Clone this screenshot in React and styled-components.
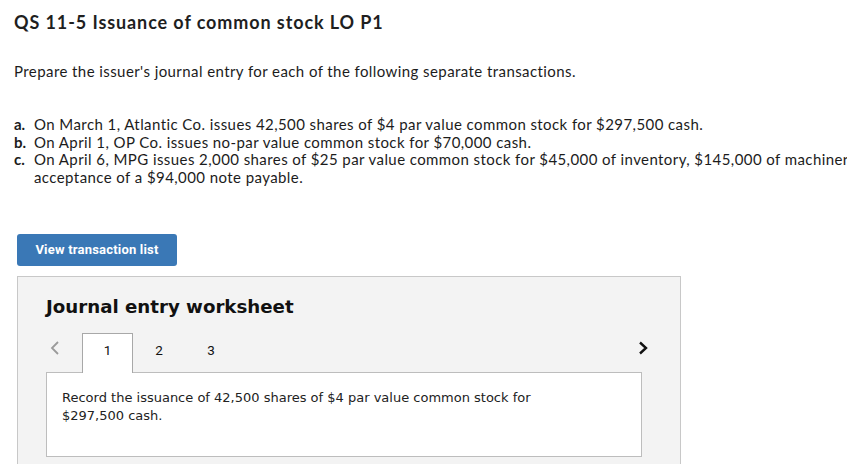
import React from "react";
import styled, { createGlobalStyle } from "styled-components";

const Global = createGlobalStyle`
  html, body { margin: 0; padding: 0; background: #fff; overflow: hidden; }
  body { width: 847px; height: 464px; }
`;

const Page = styled.div`
  width: 930px;
  padding: 11px 0 0 14px;
  font-family: Lato, "Open Sans", sans-serif;
  color: #1c1c1c;
`;

const Title = styled.h1`
  margin: 0;
  font-size: 18px;
  line-height: 22px;
  font-weight: 700;
  letter-spacing: 0.9px;
  color: #1f1f1f;
`;

const Intro = styled.p`
  margin: 28px 0 0;
  font-size: 15px;
  line-height: 20px;
  letter-spacing: 0.42px;
`;

const List = styled.ol`
  list-style: none;
  margin: 35px 0 0;
  padding: 0;
  font-size: 15px;
  line-height: 17.7px;
  letter-spacing: 0.42px;
`;

const Item = styled.li`
  display: flex;
`;

const Label = styled.span`
  flex: 0 0 20px;
  font-weight: 700;
  letter-spacing: 0;
`;

const ItemText = styled.span`
  flex: 1;
`;

const Button = styled.button`
  display: block;
  margin: 47px 0 0 3px;
  width: 160px;
  height: 32px;
  border: none;
  border-radius: 3px;
  background: #3a78b6;
  color: #fff;
  font-family: Roboto, "Liberation Sans", sans-serif;
  font-weight: 700;
  font-size: 13px;
  letter-spacing: 0.2px;
  cursor: pointer;
`;

const Worksheet = styled.section`
  margin: 10px 0 0 3px;
  width: 664px;
  height: 220px;
  background: #f3f3f3;
  border: 1px solid #c8c8c8;
  box-sizing: border-box;
  padding: 19px 32px 0 28px;
`;

const WsTitle = styled.h2`
  margin: 0;
  font-family: "DejaVu Sans", Verdana, sans-serif;
  font-size: 18.2px;
  line-height: 22px;
  font-weight: 700;
  color: #111;
`;

const TabRow = styled.div`
  display: flex;
  align-items: stretch;
  height: 40px;
  margin-top: 15px;
  position: relative;
  z-index: 1;
`;

const Arrow = styled.button`
  border: none;
  background: none;
  padding: ${(p) => (p.$right ? "0" : "0 0 0 4px")};
  width: 36px;
  display: flex;
  align-items: flex-start;
  padding-top: 8px;
  justify-content: ${(p) => (p.$right ? "flex-end" : "flex-start")};
  color: ${(p) => (p.$right ? "#111" : "#9a9a9a")};
  cursor: pointer;
`;

const Tabs = styled.div`
  display: flex;
  flex: 1;
`;

const Tab = styled.div`
  width: ${(p) => (p.$active ? "51px" : "52px")};
  box-sizing: border-box;
  display: flex;
  justify-content: center;
  padding-top: 8px;
  font-family: Roboto, "Liberation Sans", sans-serif;
  font-size: 13.5px;
  color: #111;
  background: ${(p) => (p.$active ? "#fff" : "transparent")};
  border: 1px solid ${(p) => (p.$active ? "#a8a8a8" : "transparent")};
  border-bottom: none;
`;

const Content = styled.div`
  width: 596px;
  height: 85px;
  box-sizing: border-box;
  margin-top: -1px;
  background: #fff;
  border: 1px solid #bdbdbd;
  padding: 16px 15px;
`;

const ContentText = styled.p`
  margin: 0;
  max-width: 500px;
  font-family: "DejaVu Sans", Verdana, sans-serif;
  font-size: 13px;
  line-height: 18px;
  color: #222;
`;

const Chevron = ({ dir }) =>
  dir === "left" ? (
    <svg width="10" height="14" viewBox="0 0 10 14" fill="none" stroke="currentColor" strokeWidth="1.8">
      <path d="M8 1 L2 7 L8 13" />
    </svg>
  ) : (
    <svg width="10" height="14" viewBox="0 0 10 14" fill="none" stroke="currentColor" strokeWidth="2.4">
      <path d="M2 1.5 L8 7 L2 12.5" />
    </svg>
  );

export default function App() {
  return (
    <>
      <Global />
      <Page>
        <Title>QS 11-5 Issuance of common stock LO P1</Title>
        <Intro>Prepare the issuer's journal entry for each of the following separate transactions.</Intro>
        <List>
          <Item>
            <Label>a.</Label>
            <ItemText>On March 1, Atlantic Co. issues 42,500 shares of $4 par value common stock for $297,500 cash.</ItemText>
          </Item>
          <Item>
            <Label>b.</Label>
            <ItemText>On April 1, OP Co. issues no-par value common stock for $70,000 cash.</ItemText>
          </Item>
          <Item>
            <Label>c.</Label>
            <ItemText>
              On April 6, MPG issues 2,000 shares of $25 par value common stock for $45,000 of inventory, $145,000 of machinery, and acceptance of a $94,000 note payable.
            </ItemText>
          </Item>
        </List>
        <Button>View transaction list</Button>
        <Worksheet>
          <WsTitle>Journal entry worksheet</WsTitle>
          <TabRow>
            <Arrow aria-label="previous"><Chevron dir="left" /></Arrow>
            <Tabs>
              <Tab $active>1</Tab>
              <Tab>2</Tab>
              <Tab>3</Tab>
            </Tabs>
            <Arrow $right aria-label="next"><Chevron dir="right" /></Arrow>
          </TabRow>
          <Content>
            <ContentText>Record the issuance of 42,500 shares of $4 par value common stock for $297,500 cash.</ContentText>
          </Content>
        </Worksheet>
      </Page>
    </>
  );
}
